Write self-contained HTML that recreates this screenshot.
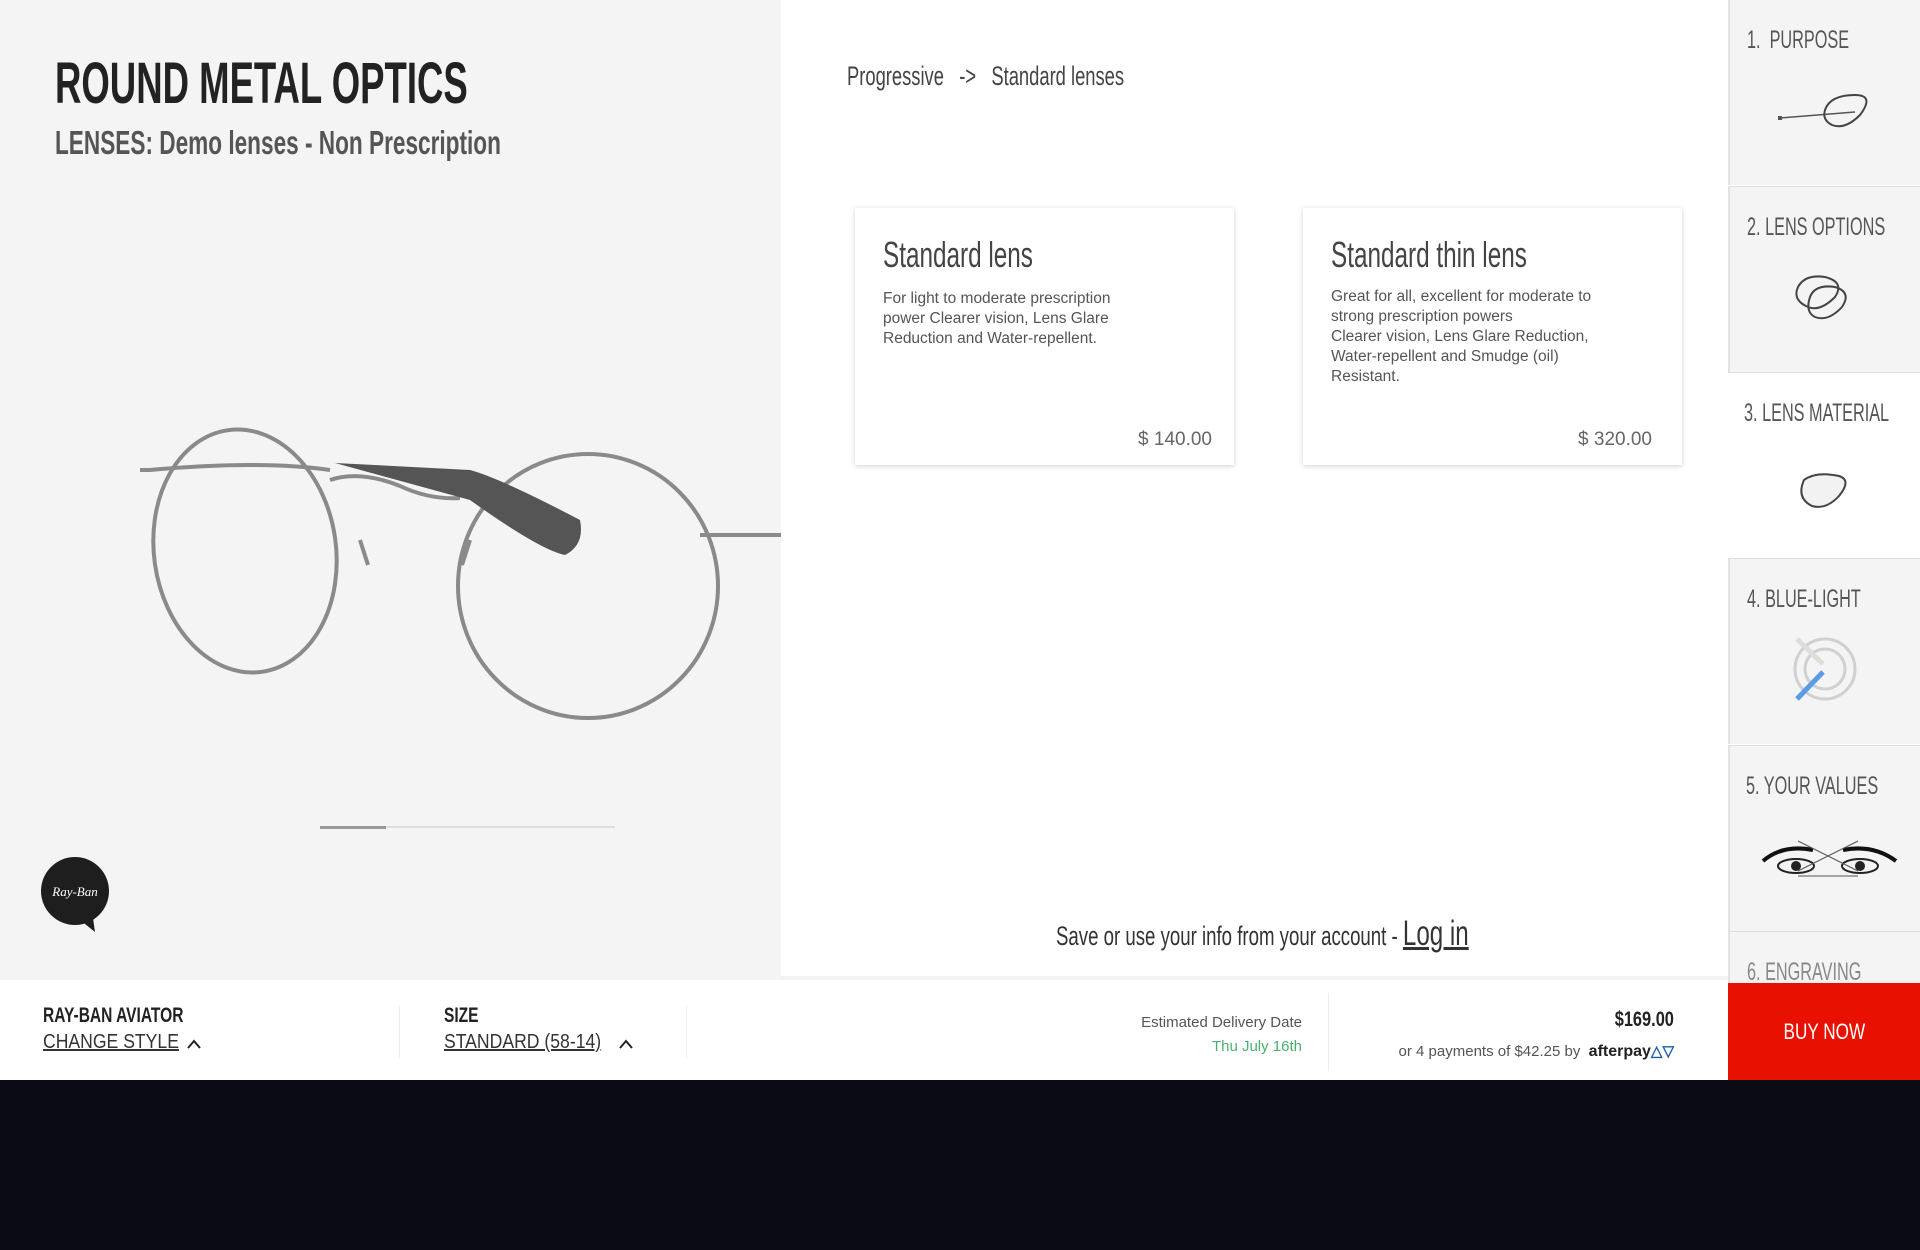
<!DOCTYPE html>
<html><head><meta charset="utf-8"><style>
*{margin:0;padding:0;box-sizing:border-box}
body{width:1920px;height:1250px;background:#0b0b16;position:relative;overflow:hidden;font-family:"Liberation Sans",sans-serif;color:#333}
.n{font-family:"Liberation Sans Narrow","Liberation Sans",sans-serif;display:inline-block;transform-origin:left center;white-space:nowrap}
.abs{position:absolute}
#left{left:0;top:0;width:781px;height:980px;background:#f4f4f4}
#main{left:781px;top:0;width:947px;height:980px;background:#fff;border-bottom:4px solid #f2f2f2}
#side{left:1728px;top:0;width:192px;height:983px;background:#fff;overflow:hidden}
.it{position:absolute;left:0;width:192px;height:186px;background:#f4f4f4;border-top:1px solid #ddd;border-left:2px solid #e2e2e2}
.it.w{background:#fff;border-left:none}
.it .lb{position:absolute;left:17px;top:26px;font-size:25px;color:#555;transform:scaleX(.65)}
.card{position:absolute;top:208px;width:379px;height:257px;background:#fff;box-shadow:0 1px 5px rgba(0,0,0,.18)}
.card h3{position:absolute;left:28px;top:26px;font-weight:normal;font-size:36px;color:#444;transform:scaleX(.675)}
.card p{position:absolute;left:28px;top:81px;font-size:15.5px;line-height:20px;color:#555}
.card .pr{position:absolute;right:22px;top:221px;font-size:19px;color:#666}
#bar{left:0;top:980px;width:1728px;height:100px;background:#fff}
</style></head><body>
<div id="left" class="abs">
<div class="abs n" style="left:55px;top:50px;font-size:58px;font-weight:bold;color:#222;transform:scaleX(.63)">ROUND METAL OPTICS</div>
<div class="abs n" style="left:55px;top:124px;font-size:33px;font-weight:bold;color:#555;transform:scaleX(.685)">LENSES: Demo lenses - Non Prescription</div>
<svg class="abs" style="left:0;top:0" width="781" height="980">
<g fill="none" stroke="#8a8a8a" stroke-width="4">
<ellipse cx="245" cy="551" rx="91" ry="122" transform="rotate(-8 245 551)"/>
<ellipse cx="588" cy="586" rx="130" ry="132"/>
<path d="M140 470 L150 470 Q260 460 330 470"/>
<path d="M330 480 Q360 470 400 486 Q430 500 460 498"/>
<path d="M700 535 L781 535"/>
<path d="M360 540 l8 25 M470 540 l-8 25"/>
</g>
<path d="M335 463 L470 470 Q500 478 580 520 Q585 545 565 555 Q540 550 470 500 Z" fill="#555"/>
<rect x="320" y="826" width="295" height="2" fill="#ddd"/>
<rect x="320" y="826" width="66" height="3" fill="#999"/>
<g><circle cx="75" cy="891" r="34" fill="#1e1e1e"/><path d="M80 920 l15 12 l-2 -14z" fill="#1e1e1e"/></g>
<text x="75" y="896" fill="#fff" font-size="13" font-style="italic" font-family="Liberation Serif" text-anchor="middle">Ray-Ban</text>
</svg>
</div>
<div id="main" class="abs">
<div class="abs n" style="left:66px;top:61px;font-size:27px;color:#444;transform:scaleX(.68)">Progressive &nbsp;&nbsp;-&gt; &nbsp;&nbsp;Standard lenses</div>
<div class="card" style="left:74px"><h3 class="n">Standard lens</h3><p>For light to moderate prescription<br>power Clearer vision, Lens Glare<br>Reduction and Water-repellent.</p><div class="pr">$ 140.00</div></div>
<div class="card" style="left:522px"><h3 class="n">Standard thin lens</h3><p style="top:79px">Great for all, excellent for moderate to<br>strong prescription powers<br>Clearer vision, Lens Glare Reduction,<br>Water-repellent and Smudge (oil)<br>Resistant.</p><div class="pr" style="right:30px">$ 320.00</div></div>
<div class="abs n" style="left:275px;top:914px;font-size:27px;color:#333;transform:scaleX(.69)">Save or use your info from your account - <span style="font-size:35px;text-decoration:underline">Log in</span></div>
</div>
<div id="side" class="abs">
<div class="it" style="top:-1px"><div class="lb n">1. &nbsp;PURPOSE</div><svg class="abs" style="left:40px;top:90px" width="110" height="50"><path d="M10 28 L85 22" stroke="#555" stroke-width="1.5"/><path d="M55 20 Q60 5 85 5 Q105 5 90 25 Q75 40 62 35 Q52 30 55 20Z" fill="none" stroke="#444" stroke-width="2"/><rect x="8" y="26" width="4" height="4" fill="#555"/></svg></div>
<div class="it" style="top:186px"><div class="lb n">2. LENS OPTIONS</div><svg class="abs" style="left:60px;top:85px" width="70" height="55"><path d="M8 15 Q15 2 35 5 Q55 10 45 25 Q30 40 18 35 Q2 28 8 15Z M20 25 Q25 12 45 15 Q62 20 52 35 Q38 50 25 45 Q15 40 20 25Z" fill="none" stroke="#444" stroke-width="2"/></svg></div>
<div class="it w" style="top:372px"><div class="lb n" style="left:16px">3. LENS MATERIAL</div><svg class="abs" style="left:66px;top:95px" width="60" height="45"><path d="M10 12 Q22 3 45 8 Q58 12 45 28 Q32 42 18 38 Q2 30 10 12Z" fill="#f2f2f2" stroke="#444" stroke-width="2"/></svg></div>
<div class="it" style="top:558px"><div class="lb n">4. BLUE-LIGHT</div><svg class="abs" style="left:55px;top:75px" width="80" height="80"><circle cx="40" cy="35" r="30" fill="none" stroke="#d0d0d0" stroke-width="3"/><circle cx="40" cy="35" r="20" fill="none" stroke="#d0d0d0" stroke-width="3"/><path d="M12 5 L38 30" stroke="#ddd" stroke-width="5"/><path d="M12 65 L38 38" stroke="#5b9ae6" stroke-width="5"/></svg></div>
<div class="it" style="top:745px"><div class="lb n" style="left:16px">5. YOUR VALUES</div><svg class="abs" style="left:28px;top:90px" width="140" height="50"><path d="M5 25 Q25 8 55 14 M85 14 Q115 8 138 25" stroke="#111" stroke-width="4" fill="none"/><ellipse cx="38" cy="30" rx="18" ry="7" fill="none" stroke="#222" stroke-width="2"/><ellipse cx="102" cy="30" rx="18" ry="7" fill="none" stroke="#222" stroke-width="2"/><circle cx="38" cy="30" r="5" fill="#222"/><circle cx="102" cy="30" r="5" fill="#222"/><path d="M40 5 L100 35 M100 5 L40 35 M40 40 L100 40" stroke="#555" stroke-width="1"/></svg></div>
<div class="it" style="top:931px"><div class="lb n" style="color:#888">6. ENGRAVING</div></div>
</div>
<div id="bar" class="abs">
<div class="abs n" style="left:43px;top:24px;font-size:21px;font-weight:bold;color:#222;transform:scaleX(.74)">RAY-BAN AVIATOR</div>
<div class="abs n" style="left:43px;top:51px;font-size:20px;color:#333;text-decoration:underline;transform:scaleX(.88)">CHANGE STYLE</div>
<svg class="abs" style="left:186px;top:58px" width="16" height="12"><path d="M2 10 L8 3 L14 10" stroke="#222" stroke-width="2" fill="none"/></svg>
<div class="abs" style="left:399px;top:26px;width:1px;height:52px;background:#eee"></div>
<div class="abs n" style="left:444px;top:24px;font-size:21px;font-weight:bold;color:#222;transform:scaleX(.74)">SIZE</div>
<div class="abs n" style="left:444px;top:51px;font-size:20px;color:#333;text-decoration:underline;transform:scaleX(.88)">STANDARD (58-14)</div>
<svg class="abs" style="left:618px;top:58px" width="16" height="12"><path d="M2 10 L8 3 L14 10" stroke="#222" stroke-width="2" fill="none"/></svg>
<div class="abs" style="left:686px;top:26px;width:1px;height:52px;background:#eee"></div>
<div class="abs" style="right:426px;top:31px;font-size:15px;color:#555;text-align:right;line-height:24px">Estimated Delivery Date<br><span style="color:#4caf6e">Thu July 16th</span></div>
<div class="abs" style="left:1328px;top:13px;width:1px;height:78px;background:#eee"></div>
<div class="abs n" style="right:54px;top:28px;font-size:21px;font-weight:bold;color:#222;transform:scaleX(.78);transform-origin:right center">$169.00</div>
<div class="abs" style="right:54px;top:62px;font-size:15px;color:#555">or 4 payments of $42.25 by &nbsp;<b style="color:#222;font-size:16px">afterpay</b><b style="color:#1c5fa8">&#x25B3;&#x25BD;</b></div>
</div>
<div class="abs" style="left:1728px;top:983px;width:192px;height:97px;background:#e81000;color:#fff;text-align:center;line-height:97px"><span class="n" style="font-size:22px;transform:scaleX(.78);transform-origin:center">BUY NOW</span></div>
</body></html>
